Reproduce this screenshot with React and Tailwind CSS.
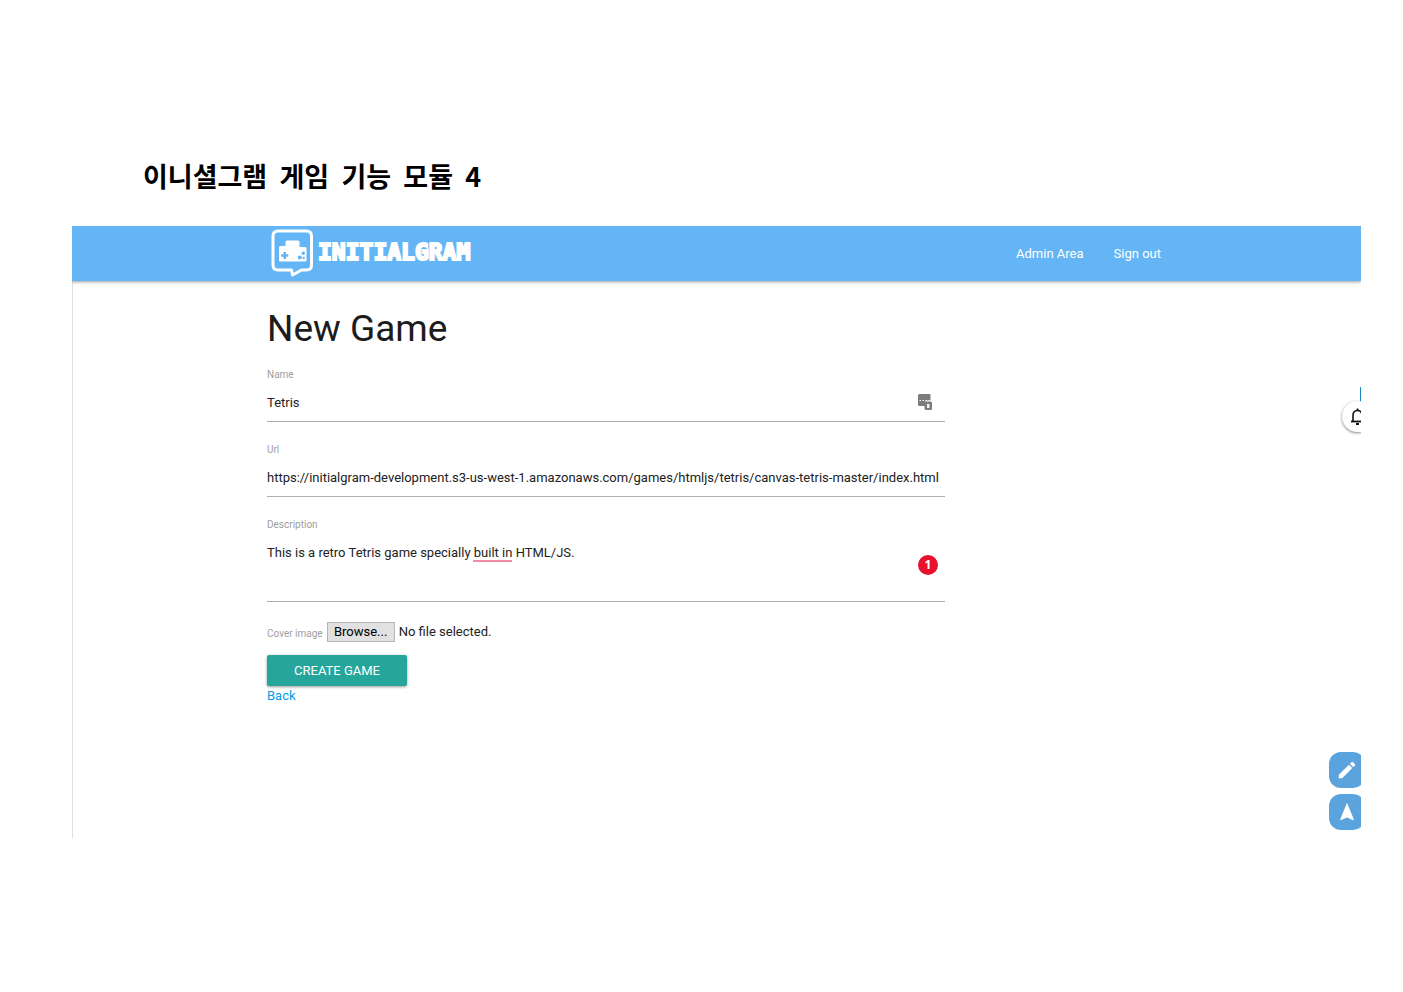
import * as React from "react";

const fieldText =
  "block w-full border-b border-[#b0b0b0] bg-transparent text-[13px] text-[#222] outline-none";
const labelText = "block text-[10px] leading-4 text-[#9e9e9e]";

function Logo() {
  return (
    <a href="/" className="flex items-start gap-1 text-white">
      <svg width="44" height="50" viewBox="0 0 44 50" aria-hidden="true">
        <path
          d="M8 3H36.500Q41.500 3 41.500 8V37Q41.500 42 36.500 42H31.500L22.500 47L21.500 42H8Q3 42 3 37V8Q3 3 8 3Z"
          fill="none"
          stroke="#fff"
          strokeWidth="3"
          strokeLinejoin="round"
        />
        <path
          d="M17 12.500H28Q29.500 12.500 29.500 14V19H35Q36.500 19 36.500 20.500V32.500Q36.500 33.500 35 33.500H10Q9 33.500 9 32.500V19.500Q9 18 10.500 18H15.500V14Q15.500 12.500 17 12.500Z"
          fill="#fff"
        />
        <path
          d="M13.500 24h2.500v2.300h2.300v2.500h-2.300v2.300h-2.500v-2.300h-2.300v-2.500h2.300z"
          fill="#64b5f6"
        />
        <circle cx="33.300" cy="25.300" r="1.700" fill="#64b5f6" />
        <circle cx="29.800" cy="29.500" r="2" fill="#64b5f6" />
        <circle cx="33.700" cy="30" r="1.200" fill="#64b5f6" />
      </svg>
      <span className="pt-3 font-['DejaVu_Sans_Mono',monospace] text-[23px] leading-6 font-bold [-webkit-text-stroke:2px_white]">
        INITIALGRAM
      </span>
    </a>
  );
}

function Navbar() {
  return (
    <nav className="relative flex h-[55px] items-center justify-between bg-[#64b5f6] pr-[200px] pb-0.5 pl-[198px] shadow-[0_1px_3px_rgba(0,0,0,0.4)]">
      <Logo />
      <div className="flex gap-[30px] pt-0.5 text-[13px] text-white">
        <a href="/admin">Admin Area</a>
        <a href="/logout">Sign out</a>
      </div>
    </nav>
  );
}

function PasswordIcon() {
  return (
    <svg
      width="16"
      height="18"
      viewBox="0 0 16 18"
      className="absolute right-3 bottom-[11px]"
      aria-hidden="true"
    >
      <path
        d="M2.500 1H12.500Q13.500 1 13.500 2V7.500H8.500V13H2.500Q1 13 1 11.500V2.500Q1 1 2.500 1Z"
        fill="#7c7c7c"
      />
      <path d="M2.500 7.500h1.500M5.500 7.500h1.500M8.500 7.500h1.500M11.500 7.500h1" stroke="#fff" />
      <rect x="7.500" y="8.500" width="7.500" height="8.500" rx="1.500" fill="#7c7c7c" />
      <path d="M10 11h2.500v4h-2.500z" fill="#f2f2f2" />
    </svg>
  );
}

function GameForm() {
  const fileRef = React.useRef(null);
  const [fileName, setFileName] = React.useState("No file selected.");

  const handleFile = (event) => {
    const file = event.target.files[0];
    setFileName(file ? file.name : "No file selected.");
  };

  return (
    <form className="w-3/4" onSubmit={(event) => event.preventDefault()}>
      <div className="relative">
        <label htmlFor="name" className={labelText}>
          Name
        </label>
        <input id="name" type="text" defaultValue="Tetris" className={`${fieldText} h-[39px]`} />
        <PasswordIcon />
      </div>

      <div className="mt-5">
        <label htmlFor="url" className={labelText}>
          Url
        </label>
        <input
          id="url"
          type="text"
          defaultValue="https://initialgram-development.s3-us-west-1.amazonaws.com/games/htmljs/tetris/canvas-tetris-master/index.html"
          className={`${fieldText} h-[39px]`}
        />
      </div>

      <div className="relative mt-5">
        <label htmlFor="description" className={labelText}>
          Description
        </label>
        <textarea
          id="description"
          spellCheck={false}
          defaultValue="This is a retro Tetris game specially built in HTML/JS."
          className={`${fieldText} h-[69px] resize-none pt-2.5 leading-5`}
        />
        <span className="absolute top-[43px] left-[206px] h-0.5 w-[39px] bg-[#f28ba5]" />
        <span className="absolute right-[7px] bottom-[27px] flex size-5 items-center justify-center rounded-full bg-[#e8112d] font-['Open_Sans',sans-serif] text-xs font-bold text-white">
          1
        </span>
      </div>

      <div className="mt-5 flex h-5 items-center text-[13px] text-[#222]">
        <label htmlFor="cover" className="pt-0.5 text-[10px] text-[#9e9e9e]">
          Cover image
        </label>
        <input
          id="cover"
          ref={fileRef}
          type="file"
          tabIndex={-1}
          className="sr-only"
          onChange={handleFile}
        />
        <button
          type="button"
          onClick={() => fileRef.current.click()}
          className="mr-1 ml-1 h-5 w-[68px] border border-[#b5b5b5] bg-[#e1e1e1] leading-4 text-black"
        >
          Browse...
        </button>
        <span>{fileName}</span>
      </div>

      <button
        type="submit"
        className="mt-[13px] block h-[31px] w-[140px] rounded-xs bg-[#26a69a] text-[13px] text-white uppercase shadow-[0_1px_3px_rgba(0,0,0,0.4)]"
      >
        Create Game
      </button>
      <a href="/games" className="block text-[13px] leading-5 text-[#039be5]">
        Back
      </a>
    </form>
  );
}

function FloatingTools() {
  return (
    <>
      <span className="absolute top-[161px] right-0 h-4 w-px bg-[#1e88c9]" />
      <button
        type="button"
        aria-label="Notifications"
        className="absolute top-[175px] -right-3 flex size-[31px] items-center justify-center rounded-full bg-white shadow-[0_1px_3px_rgba(0,0,0,0.5)]"
      >
        <svg width="18" height="20" viewBox="0 0 18 20" fill="none" stroke="#111">
          <path d="M4 14V8.500Q4 3.500 8.500 3.500Q13 3.500 13 8.500V14" strokeWidth="1.600" />
          <path d="M2 14.500H15" strokeWidth="1.800" />
          <path d="M8.500 1.500V3.500M7 17H10" strokeWidth="1.800" />
        </svg>
      </button>
      <div className="absolute -right-1 bottom-2 flex flex-col gap-1.5">
        <button
          type="button"
          aria-label="Edit"
          className="flex size-9 items-center justify-center rounded-xl bg-[#5ba3dd]"
        >
          <svg width="22" height="22" viewBox="0 0 24 24" fill="#fff">
            <path d="M3 17.250V21h3.750L17.810 9.940l-3.750-3.750L3 17.250zM20.710 7.040a1 1 0 0 0 0-1.410l-2.340-2.340a1 1 0 0 0-1.410 0l-1.830 1.830 3.750 3.750 1.830-1.830z" />
          </svg>
        </button>
        <button
          type="button"
          aria-label="Back to top"
          className="flex size-9 items-center justify-center rounded-xl bg-[#5ba3dd]"
        >
          <svg width="22" height="22" viewBox="0 0 24 24" fill="#fff">
            <path d="M12 2L4.500 20.290l.71.71L12 18l6.790 3 .71-.71z" />
          </svg>
        </button>
      </div>
    </>
  );
}

export default function App() {
  return (
    <div className="min-h-screen bg-white pt-[158px] pr-[42px] pb-20 pl-[72px] font-[Roboto,sans-serif]">
      <h1 className="pl-[71px] font-['Noto_Sans_CJK_KR',sans-serif] text-[27px] leading-9 font-bold whitespace-pre text-black">
        이니셜그램  게임  기능  모듈  4
      </h1>
      <div className="relative mt-8 overflow-hidden">
        <Navbar />
        <main className="min-h-[557px] border-l border-[#e0e0e0] pt-6 pr-[190px] pb-32 pl-[194px]">
          <h2 className="mb-[14px] text-[37px] leading-12 text-[#1c1c1c]">New Game</h2>
          <GameForm />
        </main>
        <FloatingTools />
      </div>
    </div>
  );
}
